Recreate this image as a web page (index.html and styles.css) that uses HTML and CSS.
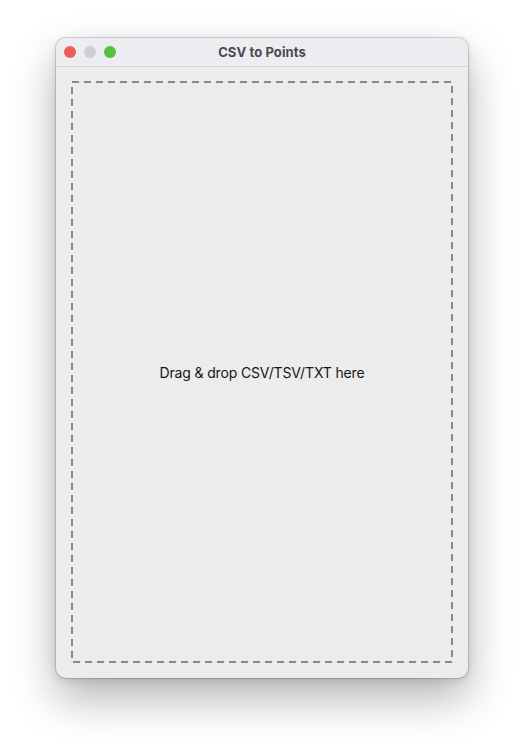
FILE: index.html
```html
<!DOCTYPE html>
<html>
<head>
<meta charset="utf-8">
<link rel="stylesheet" href="styles.css">
</head>
<body>
<div class="window">
  <div class="titlebar">
    <div class="lights">
      <span class="light red"></span>
      <span class="light gray"></span>
      <span class="light green"></span>
    </div>
    <div class="title">CSV to Points</div>
  </div>
  <div class="content">
    <div class="dropzone">
      <svg class="dash" width="100%" height="100%" preserveAspectRatio="none">
        <rect x="1" y="1" width="calc(100% - 2px)" height="calc(100% - 2px)" fill="none" stroke="#888888" stroke-width="2" stroke-dasharray="7 5"/>
      </svg>
      <span class="label">Drag &amp; drop CSV/TSV/TXT here</span>
    </div>
  </div>
</div>
</body>
</html>
```
FILE: styles.css
```css
html, body {
  margin: 0;
  padding: 0;
  background: #ffffff;
}
body {
  width: 524px;
  height: 752px;
  overflow: hidden;
  font-family: Inter, "Liberation Sans", sans-serif;
}
.window {
  margin: 38px 0 0 56px;
  width: 412px;
  height: 640px;
  border-radius: 10px;
  background: #ececec;
  box-shadow: 0 0 0 1px rgba(0,0,0,0.14), 0 20px 44px rgba(0,0,0,0.30), 0 2px 8px rgba(0,0,0,0.12);
  overflow: hidden;
  display: flex;
  flex-direction: column;
}
.titlebar {
  height: 28px;
  flex: none;
  background: #edecf1;
  border-bottom: 1px solid #d6d5da;
  position: relative;
  display: flex;
  align-items: center;
  justify-content: center;
}
.lights {
  position: absolute;
  left: 8px;
  top: 8px;
  display: flex;
  gap: 8px;
}
.light {
  width: 12px;
  height: 12px;
  border-radius: 50%;
  display: block;
}
.red { background: #ec5f57; }
.gray { background: #cfcdd5; }
.green { background: #56c140; }
.title {
  font-size: 13px;
  font-weight: 700;
  color: #4a4a4e;
  letter-spacing: 0.1px;
}
.content {
  flex: 1;
  padding: 14px 15px 15px 15px;
  display: flex;
}
.dropzone {
  flex: 1;
  position: relative;
  display: flex;
  align-items: center;
  justify-content: center;
}
.dash {
  position: absolute;
  inset: 0;
}
.label {
  font-size: 14px;
  color: #161616;
  letter-spacing: -0.15px;
}
```
